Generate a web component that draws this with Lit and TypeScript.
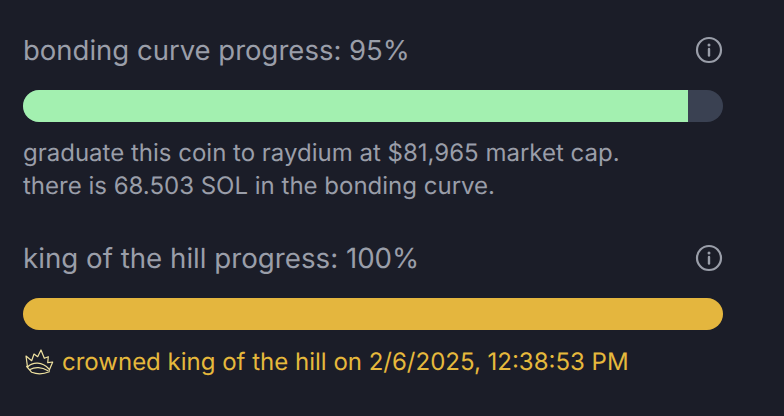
import { LitElement, html, css, svg } from "lit";
import { customElement } from "lit/decorators.js";

const info = svg`<svg class="info" width="28" height="28" viewBox="0 0 28 28" fill="none">
  <circle cx="14" cy="14" r="12" stroke="#9a9ea9" stroke-width="2.2"/>
  <circle cx="14" cy="9" r="1.5" fill="#9a9ea9"/>
  <path d="M14 13v6.5" stroke="#9a9ea9" stroke-width="2.4" stroke-linecap="round"/>
</svg>`;

const crown = svg`<svg class="crown" width="30" height="26" viewBox="0 0 30 26" fill="none" stroke="#efe2a0" stroke-width="1.2" stroke-linejoin="round" stroke-linecap="round">
  <path d="M3.500 18 2 7l5.700 4.700L10 5l3.700 2.700L17 1l3.300 8.300 4-1.600-.6 6 5-.7-3.700 8.700"/>
  <path d="M3.500 18C9 12.500 18 12.500 25 20"/>
  <path d="M2.700 17.500 7.700 23.300C13 25.300 20 25 25.300 22.700"/>
  <path d="M6 20.500C11 17.500 18 18 23.500 21.500"/>
</svg>`;

@customElement("app-root")
export class AppRoot extends LitElement {
  static styles = css`
    :host {
      display: block;
      width: 784px;
      height: 416px;
      background: #1b1d28;
      font-family: Inter, "Liberation Sans", sans-serif;
      text-rendering: geometricPrecision;
      overflow: hidden;
    }
    .wrap {
      width: 700px;
      margin-left: 23px;
      padding-top: 34px;
      display: flex;
      flex-direction: column;
    }
    .head {
      display: flex;
      justify-content: space-between;
      align-items: center;
      height: 32px;
      font-size: 27.500px;
      color: #9a9ea9;
      white-space: nowrap;
    }
    .info { display: block; }
    .track {
      height: 32px;
      border-radius: 16px;
      overflow: hidden;
      background: #3a4152;
      margin-top: 24px;
    }
    .fill { height: 100%; }
    .green { background: #a3f0b0; }
    .gold { background: #e4b63e; }
    .desc {
      margin-top: 15px;
      font-size: 24px;
      line-height: 32.500px;
      color: #9a9ea9;
    }
    .second { margin-top: 40px; font-size: 27.700px; }
    .crowned {
      margin-top: 16px;
      display: flex;
      align-items: center;
      gap: 8px;
      font-size: 24px;
      line-height: 32px;
      color: #e6b93c;
      white-space: nowrap;
    }
    .crown { display: block; margin-left: 1px; }
  `;

  render() {
    return html`<div class="wrap">
      <div class="head"><span>bonding curve progress: 95%</span>${info}</div>
      <div class="track"><div class="fill green" style="width: 95%"></div></div>
      <div class="desc">graduate this coin to raydium at $81,965 market cap.<br />there is 68.503 SOL in the bonding curve.</div>
      <div class="head second"><span>king of the hill progress: 100%</span>${info}</div>
      <div class="track"><div class="fill gold" style="width: 100%"></div></div>
      <div class="crowned">${crown}<span>crowned king of the hill on 2/6/2025, 12:38:53 PM</span></div>
    </div>`;
  }
}
